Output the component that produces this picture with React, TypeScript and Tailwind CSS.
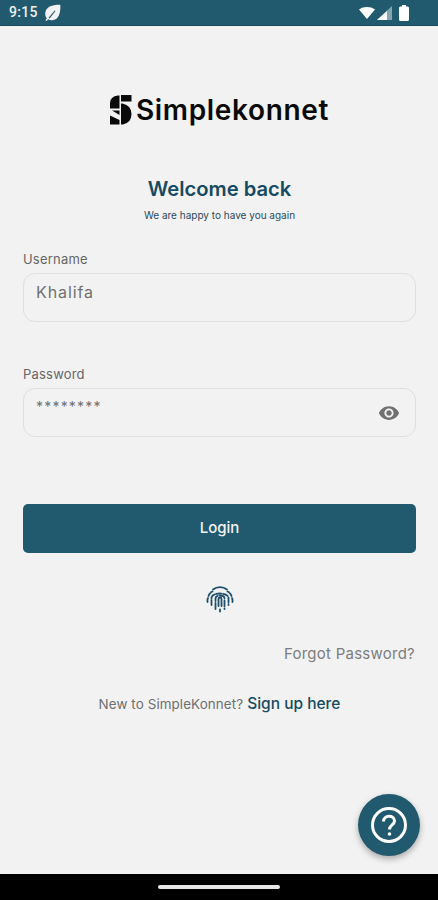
import React from "react";
import { MdVisibility } from "react-icons/md";

function Leaf() {
  return (
    <svg width="17" height="17" viewBox="0 0 24 24" fill="#f2f2f2">
      <path d="M23 1C13 1 5 3 2.500 9.500C.8 14 2 18 4 20.500L2 23l1.500 1L6 21.500C8.500 23 12 23.500 15.500 22C22 19 23.500 10 23 1ZM6.500 19.500L15 9l1.200 1L8 20.500Z" fillRule="evenodd" />
    </svg>
  );
}

function Wifi() {
  return (
    <svg width="16" height="12" viewBox="0 0 16 12" fill="#ffffff">
      <path d="M0 2.500C4.500 -.8 11.500 -.8 16 2.500L8 12Z" />
    </svg>
  );
}

function Signal() {
  return (
    <svg width="15" height="14" viewBox="0 0 15 14">
      <path d="M15 0V14H0Z" fill="#ffffff" opacity="0.45" />
      <path d="M10 5V14H0L10 5Z" fill="#ffffff" />
    </svg>
  );
}

function Battery() {
  return (
    <svg width="10" height="16" viewBox="0 0 10 16" fill="#ffffff">
      <path d="M3 0H7V1.500H8.500Q10 1.500 10 3V14.500Q10 16 8.500 16H1.500Q0 16 0 14.500V3Q0 1.500 1.500 1.500H3Z" />
    </svg>
  );
}

function LogoMark() {
  return (
    <svg width="22" height="30" viewBox="0 0 22 30" fill="#0a0a0a">
      <path d="M0 13.500V8Q0 1.500 8 .5H9.500V13.500Z" />
      <path d="M11 0H21.500V6.500H11Z" />
      <path d="M11 8.500H12.500Q21.500 10.500 21.500 19Q21.500 27.500 13 29.500H11Z" />
      <path d="M2 15.500H9.500V20Z" />
      <path d="M0 20.500L9.500 25V29.500H0Z" />
    </svg>
  );
}

function FingerprintMark() {
  return (
    <svg width="28" height="28" viewBox="0 0 28 28" fill="none" stroke="#1c4f6b" strokeWidth="1.8" strokeLinecap="round">
      <path d="M7 4.500C11 1.200 17 1.200 21 4.500" />
      <path d="M2.500 11C3.500 8.500 5 7 6.500 6.500" strokeDasharray="3 1.500" />
      <path d="M1.500 17C1.300 15.500 1.500 14 2 13" />
      <path d="M25.500 11C24.500 8.500 23 7 21.500 6.500" strokeDasharray="3 1.500" />
      <path d="M26.500 17C26.700 15.500 26.500 14 26 13" />
      <path d="M5.500 20V13C5.500 7 22.500 7 22.500 13V20" strokeDasharray="5 1.800" />
      <path d="M9.500 24V13.500C9.500 9.500 18.500 9.500 18.500 13.500V24" strokeDasharray="6 2" />
      <path d="M12.500 21V14C12.500 12 15.500 12 15.500 14V21" />
      <path d="M14 24.500V26.500" />
    </svg>
  );
}

export default function App() {
  return (
    <div className="relative flex h-[900px] w-[438px] flex-col overflow-hidden bg-[#f2f2f2] font-['Inter',sans-serif]">
      <div className="flex h-[26px] shrink-0 items-center justify-between border-b border-[#174a5c] bg-[#215a6e] pl-[9px] pr-[29px]">
        <div className="flex items-center gap-[6px]">
          <span className="text-[14px] font-medium tracking-[0.3px] text-[#f0f0f0] font-['Roboto',sans-serif]">9:15</span>
          <Leaf />
        </div>
        <div className="flex items-center gap-[2px]">
          <Wifi />
          <Signal />
          <span className="ml-[5px] flex"><Battery /></span>
        </div>
      </div>

      <main className="flex flex-1 flex-col pl-[23px] pr-[22px]">
        <div className="mt-[69px] flex h-[30px] items-center justify-center gap-[4px]">
          <LogoMark />
          <span className="text-[28px] font-semibold leading-none tracking-[0.65px] text-[#0a0a0a]">Simplekonnet</span>
        </div>

        <h1 className="mt-[50px] text-center text-[20.2px] font-semibold leading-[28px] text-[#174a63]">Welcome back</h1>
        <p className="mt-[6px] text-center text-[10px] leading-[12px] text-[#2c4a5c]">We are happy to have you again</p>

        <label className="mt-[30px] text-[13px] leading-[16px] tracking-[0.2px] text-[#666666]">Username</label>
        <div className="mt-[6px] h-[49px] rounded-[12px] border border-[#dfdfdf] pl-[12px] pt-[8px] text-[16px] leading-[20px] tracking-[0.9px] text-[#707070]">
          Khalifa
        </div>

        <label className="mt-[44px] text-[13px] leading-[16px] tracking-[0.2px] text-[#666666]">Password</label>
        <div className="mt-[6px] flex h-[49px] justify-between rounded-[12px] border border-[#dfdfdf] pl-[12px] pr-[15px]">
          <span className="pt-[8px] text-[14px] leading-[20px] tracking-[1.2px] text-[#707070]">********</span>
          <MdVisibility size={22} className="mt-[13px] text-[#707070]" />
        </div>

        <button className="mt-[67px] h-[49px] rounded-[5px] bg-[#215a6e] text-[15px] font-medium text-[#f2f2f2]">Login</button>

        <div className="mt-[32px] flex justify-center">
          <FingerprintMark />
        </div>

        <div className="mt-[31px] pr-[1px] text-right text-[15px] leading-[20px] tracking-[0.25px] text-[#7d7d7d]">Forgot Password?</div>

        <div className="mt-[30px] flex items-center justify-center gap-[4px]">
          <span className="text-[13.4px] leading-[20px] tracking-[0.1px] text-[#6e6e6e]">New to SimpleKonnet?</span>
          <span className="text-[15.5px] font-medium leading-[20px] text-[#174a63]">Sign up here</span>
        </div>
      </main>

      <div className="flex h-[26px] shrink-0 items-center justify-center bg-black">
        <div className="h-[4px] w-[122px] rounded-full bg-[#e8e8e8]" />
      </div>

      <button className="absolute left-[358px] top-[794px] flex h-[62px] w-[62px] items-center justify-center rounded-full bg-[#215a6e] shadow-[0_3px_6px_rgba(0,0,0,0.3)]">
        <svg width="38" height="38" viewBox="0 0 38 38" fill="none" stroke="#ffffff">
          <circle cx="19" cy="19" r="16.500" strokeWidth="3" />
          <path d="M13.500 15.500C13.500 8.500 24.500 8.500 24.500 15C24.500 19 19.500 19 19.500 23.500" strokeWidth="3" />
          <circle cx="19.500" cy="28" r="1.800" fill="#ffffff" stroke="none" />
        </svg>
      </button>
    </div>
  );
}
